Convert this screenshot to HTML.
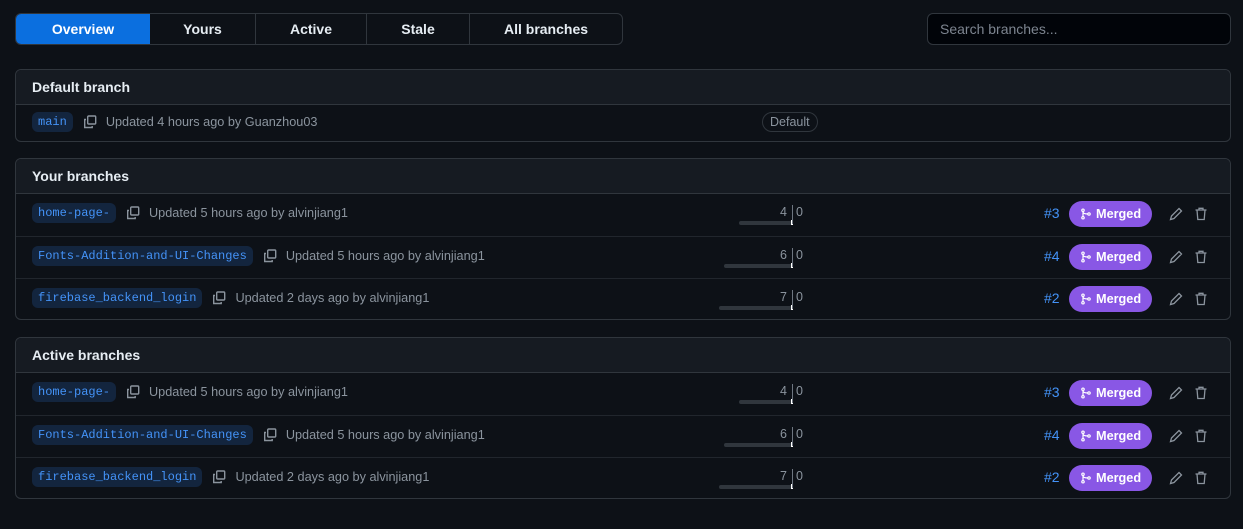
<!DOCTYPE html>
<html><head><meta charset="utf-8"><style>
*{box-sizing:border-box;margin:0;padding:0}
body{width:1243px;height:529px;background:#0d1117;font-family:"Liberation Sans",sans-serif;color:#e6edf3;position:relative;overflow:hidden;font-size:14px}
.tabs{position:absolute;left:15px;top:13px;width:608px;height:32px;border:1px solid #30363d;border-radius:6px;display:flex;overflow:hidden}
.tabs div{height:100%;display:flex;align-items:center;justify-content:center;font-weight:bold;font-size:14px;border-right:1px solid #30363d;color:#e6edf3}
.tabs div:last-child{border-right:none}
.tabs .on{background:#0b6fdf;color:#fff;border-right:none}
.search{position:absolute;left:927px;top:13px;width:304px;height:32px;border:1px solid #30363d;border-radius:6px;background:#010409;color:#7d8590;padding-left:12px;line-height:30px;font-size:14px}
.box{position:absolute;left:15px;width:1216px;border:1px solid #30363d;border-radius:6px;overflow:hidden}
.hd{height:35px;background:#161b22;border-bottom:1px solid #30363d;padding-left:16px;font-weight:bold;font-size:14px;line-height:34px}
.row{position:relative;height:42px;border-top:1px solid #21262d}
.hd+.row{border-top:none}
.br{position:absolute;left:16px;top:-2px;height:100%;display:flex;align-items:center}
.pill{font-family:"Liberation Mono",monospace;font-size:12px;color:#4493f8;background:#13253e;border-radius:6px;padding:0 6px;height:20px;line-height:20px}
.cp{margin:0 8px 0 9px;width:16px;height:16px}
.up{color:#8b949e;font-size:12.7px}
.n1{position:absolute;left:740px;width:31px;text-align:right;top:11px;font-size:12.5px;color:#8b949e}
.n2{position:absolute;left:780px;top:11px;font-size:12.5px;color:#8b949e}
.bar{position:absolute;top:27px;height:4px;background:#30363d;border-radius:2px}
.tk{position:absolute;left:775px;top:26px;width:2px;height:5px;background:#fff}
.vl{position:absolute;left:776px;top:11px;width:1px;height:19px;background:#6e7681}
.pr{position:absolute;left:1028px;top:11px;color:#4493f8;font-size:14px}
.mg{position:absolute;left:1053px;top:7px;width:83px;height:26px;border-radius:13px;background:#8957e5;color:#fff;font-weight:bold;font-size:12.7px;display:flex;align-items:center;padding-left:11px}
.mg svg{margin-right:4px}
.ic{position:absolute;top:12px}
</style></head><body>
<div class="tabs"><div class="on" style="width:134px">Overview</div><div style="width:106px">Yours</div><div style="width:111px">Active</div><div style="width:103px">Stale</div><div style="width:152px">All branches</div></div>
<div class="search">Search branches...</div>

<div class="box" style="top:69px;height:73px">
<div class="hd">Default branch</div>
<div class="row" style="height:37px"><div class="br"><span class="pill">main</span><svg class="cp" viewBox="0 0 16 16" fill="none" stroke="#8b949e" stroke-width="1.4"><path d="M4 5.5H2.7v8h7.5V12"/><rect x="5.7" y="2" width="8" height="8" rx="1"/></svg><span class="up">Updated 4 hours ago by Guanzhou03</span></div>
<div style="position:absolute;left:746px;top:7px;height:20px;border:1px solid #30363d;border-radius:10px;padding:0 7px;font-size:12.5px;color:#8b949e;line-height:18px">Default</div></div>
</div>

<div class="box" style="top:158px;height:162px">
<div class="hd">Your branches</div>
<div class="row"><div class="br"><span class="pill">home-page-</span><svg class="cp" viewBox="0 0 16 16" fill="none" stroke="#8b949e" stroke-width="1.4"><path d="M4 5.5H2.7v8h7.5V12"/><rect x="5.7" y="2" width="8" height="8" rx="1"/></svg><span class="up">Updated 5 hours ago by alvinjiang1</span></div>
<div class="bar" style="left:723px;width:54px"></div><div class="tk"></div><div class="vl"></div><span class="n1">4</span><span class="n2">0</span>
<span class="pr">#3</span><div class="mg"><svg width="12" height="12" viewBox="0 0 16 16" fill="none" stroke="#fff" stroke-width="1.6"><circle cx="4" cy="3" r="1.6"/><circle cx="4" cy="13" r="1.6"/><circle cx="12" cy="8" r="1.6"/><path d="M4 4.6v6.8M4 5c0 2 2 3 6.4 3"/></svg>Merged</div>
<svg class="ic" style="left:1152px" width="16" height="16" viewBox="0 0 16 16" fill="none" stroke="#8b949e" stroke-width="1.3"><path d="M11 2.5l2.5 2.5L6 12.5 2.5 13.5 3.5 10z"/></svg>
<svg class="ic" style="left:1177px" width="16" height="16" viewBox="0 0 16 16" fill="none" stroke="#8b949e" stroke-width="1.3"><path d="M2.5 4h11M6 4V2.3h4V4M4 4l.8 9.5h6.4L12 4"/></svg></div>
<div class="row"><div class="br"><span class="pill">Fonts-Addition-and-UI-Changes</span><svg class="cp" viewBox="0 0 16 16" fill="none" stroke="#8b949e" stroke-width="1.4"><path d="M4 5.5H2.7v8h7.5V12"/><rect x="5.7" y="2" width="8" height="8" rx="1"/></svg><span class="up">Updated 5 hours ago by alvinjiang1</span></div>
<div class="bar" style="left:708px;width:69px"></div><div class="tk"></div><div class="vl"></div><span class="n1">6</span><span class="n2">0</span>
<span class="pr">#4</span><div class="mg"><svg width="12" height="12" viewBox="0 0 16 16" fill="none" stroke="#fff" stroke-width="1.6"><circle cx="4" cy="3" r="1.6"/><circle cx="4" cy="13" r="1.6"/><circle cx="12" cy="8" r="1.6"/><path d="M4 4.6v6.8M4 5c0 2 2 3 6.4 3"/></svg>Merged</div>
<svg class="ic" style="left:1152px" width="16" height="16" viewBox="0 0 16 16" fill="none" stroke="#8b949e" stroke-width="1.3"><path d="M11 2.5l2.5 2.5L6 12.5 2.5 13.5 3.5 10z"/></svg>
<svg class="ic" style="left:1177px" width="16" height="16" viewBox="0 0 16 16" fill="none" stroke="#8b949e" stroke-width="1.3"><path d="M2.5 4h11M6 4V2.3h4V4M4 4l.8 9.5h6.4L12 4"/></svg></div>
<div class="row"><div class="br"><span class="pill">firebase_backend_login</span><svg class="cp" viewBox="0 0 16 16" fill="none" stroke="#8b949e" stroke-width="1.4"><path d="M4 5.5H2.7v8h7.5V12"/><rect x="5.7" y="2" width="8" height="8" rx="1"/></svg><span class="up">Updated 2 days ago by alvinjiang1</span></div>
<div class="bar" style="left:703px;width:74px"></div><div class="tk"></div><div class="vl"></div><span class="n1">7</span><span class="n2">0</span>
<span class="pr">#2</span><div class="mg"><svg width="12" height="12" viewBox="0 0 16 16" fill="none" stroke="#fff" stroke-width="1.6"><circle cx="4" cy="3" r="1.6"/><circle cx="4" cy="13" r="1.6"/><circle cx="12" cy="8" r="1.6"/><path d="M4 4.6v6.8M4 5c0 2 2 3 6.4 3"/></svg>Merged</div>
<svg class="ic" style="left:1152px" width="16" height="16" viewBox="0 0 16 16" fill="none" stroke="#8b949e" stroke-width="1.3"><path d="M11 2.5l2.5 2.5L6 12.5 2.5 13.5 3.5 10z"/></svg>
<svg class="ic" style="left:1177px" width="16" height="16" viewBox="0 0 16 16" fill="none" stroke="#8b949e" stroke-width="1.3"><path d="M2.5 4h11M6 4V2.3h4V4M4 4l.8 9.5h6.4L12 4"/></svg></div>
</div>

<div class="box" style="top:337px;height:162px">
<div class="hd">Active branches</div>
<div class="row"><div class="br"><span class="pill">home-page-</span><svg class="cp" viewBox="0 0 16 16" fill="none" stroke="#8b949e" stroke-width="1.4"><path d="M4 5.5H2.7v8h7.5V12"/><rect x="5.7" y="2" width="8" height="8" rx="1"/></svg><span class="up">Updated 5 hours ago by alvinjiang1</span></div>
<div class="bar" style="left:723px;width:54px"></div><div class="tk"></div><div class="vl"></div><span class="n1">4</span><span class="n2">0</span>
<span class="pr">#3</span><div class="mg"><svg width="12" height="12" viewBox="0 0 16 16" fill="none" stroke="#fff" stroke-width="1.6"><circle cx="4" cy="3" r="1.6"/><circle cx="4" cy="13" r="1.6"/><circle cx="12" cy="8" r="1.6"/><path d="M4 4.6v6.8M4 5c0 2 2 3 6.4 3"/></svg>Merged</div>
<svg class="ic" style="left:1152px" width="16" height="16" viewBox="0 0 16 16" fill="none" stroke="#8b949e" stroke-width="1.3"><path d="M11 2.5l2.5 2.5L6 12.5 2.5 13.5 3.5 10z"/></svg>
<svg class="ic" style="left:1177px" width="16" height="16" viewBox="0 0 16 16" fill="none" stroke="#8b949e" stroke-width="1.3"><path d="M2.5 4h11M6 4V2.3h4V4M4 4l.8 9.5h6.4L12 4"/></svg></div>
<div class="row"><div class="br"><span class="pill">Fonts-Addition-and-UI-Changes</span><svg class="cp" viewBox="0 0 16 16" fill="none" stroke="#8b949e" stroke-width="1.4"><path d="M4 5.5H2.7v8h7.5V12"/><rect x="5.7" y="2" width="8" height="8" rx="1"/></svg><span class="up">Updated 5 hours ago by alvinjiang1</span></div>
<div class="bar" style="left:708px;width:69px"></div><div class="tk"></div><div class="vl"></div><span class="n1">6</span><span class="n2">0</span>
<span class="pr">#4</span><div class="mg"><svg width="12" height="12" viewBox="0 0 16 16" fill="none" stroke="#fff" stroke-width="1.6"><circle cx="4" cy="3" r="1.6"/><circle cx="4" cy="13" r="1.6"/><circle cx="12" cy="8" r="1.6"/><path d="M4 4.6v6.8M4 5c0 2 2 3 6.4 3"/></svg>Merged</div>
<svg class="ic" style="left:1152px" width="16" height="16" viewBox="0 0 16 16" fill="none" stroke="#8b949e" stroke-width="1.3"><path d="M11 2.5l2.5 2.5L6 12.5 2.5 13.5 3.5 10z"/></svg>
<svg class="ic" style="left:1177px" width="16" height="16" viewBox="0 0 16 16" fill="none" stroke="#8b949e" stroke-width="1.3"><path d="M2.5 4h11M6 4V2.3h4V4M4 4l.8 9.5h6.4L12 4"/></svg></div>
<div class="row"><div class="br"><span class="pill">firebase_backend_login</span><svg class="cp" viewBox="0 0 16 16" fill="none" stroke="#8b949e" stroke-width="1.4"><path d="M4 5.5H2.7v8h7.5V12"/><rect x="5.7" y="2" width="8" height="8" rx="1"/></svg><span class="up">Updated 2 days ago by alvinjiang1</span></div>
<div class="bar" style="left:703px;width:74px"></div><div class="tk"></div><div class="vl"></div><span class="n1">7</span><span class="n2">0</span>
<span class="pr">#2</span><div class="mg"><svg width="12" height="12" viewBox="0 0 16 16" fill="none" stroke="#fff" stroke-width="1.6"><circle cx="4" cy="3" r="1.6"/><circle cx="4" cy="13" r="1.6"/><circle cx="12" cy="8" r="1.6"/><path d="M4 4.6v6.8M4 5c0 2 2 3 6.4 3"/></svg>Merged</div>
<svg class="ic" style="left:1152px" width="16" height="16" viewBox="0 0 16 16" fill="none" stroke="#8b949e" stroke-width="1.3"><path d="M11 2.5l2.5 2.5L6 12.5 2.5 13.5 3.5 10z"/></svg>
<svg class="ic" style="left:1177px" width="16" height="16" viewBox="0 0 16 16" fill="none" stroke="#8b949e" stroke-width="1.3"><path d="M2.5 4h11M6 4V2.3h4V4M4 4l.8 9.5h6.4L12 4"/></svg></div>
</div>
</body></html>
